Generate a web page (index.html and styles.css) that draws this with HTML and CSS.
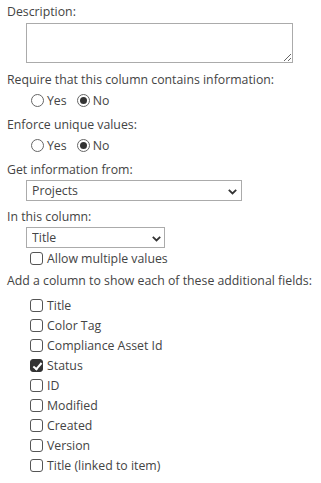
FILE: index.html
```html
<!DOCTYPE html>
<html lang="en">
<head>
    <meta charset="UTF-8">
    <meta name="viewport" content="width=device-width, initial-scale=1.0">
    <title>Column settings</title>
    <link rel="stylesheet" href="styles.css">
</head>
<body>
    <div class="form">
        <div class="label">Description:</div>
        <div class="field area">
            <textarea class="desc"></textarea>
        </div>

        <div class="label">Require that this column contains information:</div>
        <div class="radios">
            <label><input type="radio" name="req"> Yes</label>
            <label><input type="radio" name="req" checked> No</label>
        </div>

        <div class="label">Enforce unique values:</div>
        <div class="radios">
            <label><input type="radio" name="uniq"> Yes</label>
            <label><input type="radio" name="uniq" checked> No</label>
        </div>

        <div class="label">Get information from:</div>
        <div class="field">
            <div class="select wide">
                <select><option>Projects</option></select>
                <svg class="chev" width="9" height="6" viewBox="0 0 9 6"><path d="M0.8 0.8 L4.5 4.4 L8.2 0.8" fill="none" stroke="#333" stroke-width="1.8"/></svg>
            </div>
        </div>

        <div class="label">In this column:</div>
        <div class="field tight">
            <div class="select narrow">
                <select><option>Title</option></select>
                <svg class="chev" width="9" height="6" viewBox="0 0 9 6"><path d="M0.8 0.8 L4.5 4.4 L8.2 0.8" fill="none" stroke="#333" stroke-width="1.8"/></svg>
            </div>
        </div>
        <div class="checks single">
            <label class="check"><input type="checkbox"> Allow multiple values</label>
        </div>

        <div class="label">Add a column to show each of these additional fields:</div>
        <div class="checks list">
            <label class="check"><input type="checkbox"> Title</label>
            <label class="check"><input type="checkbox"> Color Tag</label>
            <label class="check"><input type="checkbox"> Compliance Asset Id</label>
            <label class="check"><input type="checkbox" checked> Status</label>
            <label class="check"><input type="checkbox"> ID</label>
            <label class="check"><input type="checkbox"> Modified</label>
            <label class="check"><input type="checkbox"> Created</label>
            <label class="check"><input type="checkbox"> Version</label>
            <label class="check"><input type="checkbox"> Title (linked to item)</label>
        </div>
    </div>
</body>
</html>
```

FILE: styles.css
```css
body {
    margin: 0;
    padding: 0;
    background: #fff;
    color: #444;
    font-family: "Open Sans", "Noto Sans", sans-serif;
    font-size: 12.3px;
}

.form {
    padding: 2px 7px 0;
}

.label {
    line-height: 20px;
    white-space: nowrap;
}

.field {
    padding-left: 19px;
    margin-bottom: 6px;
}

.field.area {
    padding-top: 1px;
    margin-bottom: 7px;
}

.field.tight {
    margin-bottom: 0;
}

.desc {
    display: block;
    width: 267px;
    height: 40px;
    box-sizing: border-box;
    border: 1px solid #ababab;
    margin: 0;
    resize: both;
}

/* yes / no rows */
.radios {
    display: flex;
    gap: 10px;
    padding-left: 24px;
    height: 21px;
    margin-bottom: 4px;
}

.radios label {
    display: flex;
    align-items: center;
    gap: 3px;
}

input[type="radio"] {
    appearance: none;
    width: 13px;
    height: 13px;
    margin: 0;
    border: 1px solid #666;
    border-radius: 50%;
    position: relative;
}

input[type="radio"]:checked::after {
    content: "";
    position: absolute;
    left: 2px;
    top: 2px;
    width: 7px;
    height: 7px;
    border-radius: 50%;
    background: #333;
}

/* dropdowns */
.select {
    position: relative;
}

.select select {
    appearance: none;
    display: block;
    height: 21px;
    box-sizing: border-box;
    border: 1px solid #ababab;
    border-radius: 0;
    background: #fff;
    color: #444;
    font-family: inherit;
    font-size: 12.3px;
    padding: 0 0 0 5px;
}

.wide select {
    width: 216px;
}

.narrow select {
    width: 139px;
}

.chev {
    position: absolute;
    top: 9px;
}

.wide .chev {
    left: 202px;
}

.narrow .chev {
    left: 126px;
}

/* checkbox lists */
.checks {
    padding-left: 23px;
}

.checks.single {
    margin-bottom: 3px;
}

.checks.list {
    padding-top: 4px;
}

.check {
    display: flex;
    align-items: center;
    gap: 4px;
    height: 20px;
}

input[type="checkbox"] {
    appearance: none;
    width: 13px;
    height: 13px;
    margin: 1px 0 0;
    border: 1px solid #555;
    border-radius: 3px;
    position: relative;
}

input[type="checkbox"]:checked {
    background: #333;
    border-color: #333;
}

input[type="checkbox"]:checked::after {
    content: "";
    position: absolute;
    left: 3.5px;
    top: 0.5px;
    width: 3px;
    height: 7px;
    border: solid #fff;
    border-width: 0 2px 2px 0;
    transform: rotate(40deg);
}
```
